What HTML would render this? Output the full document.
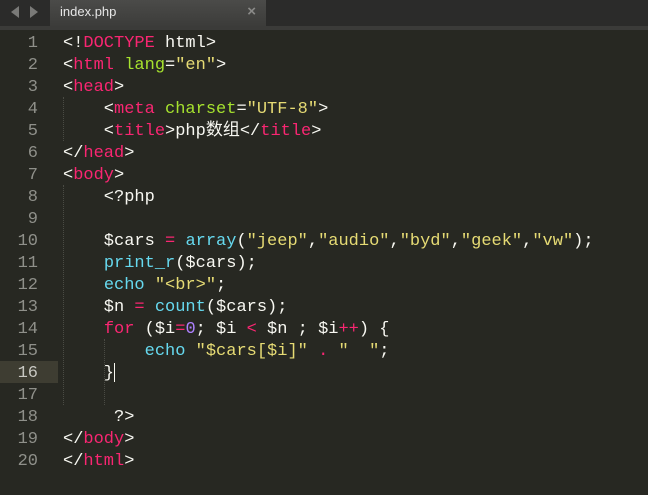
<!DOCTYPE html>
<html><head><meta charset="utf-8"><style>
body{margin:0;width:648px;height:492px;background:#272822;overflow:hidden;position:relative;font-family:"Liberation Mono","Noto Sans CJK SC",monospace}
.bar{position:absolute;left:0;top:0;width:648px;height:26px;background:#2b2b2a}
.strip{position:absolute;left:0;top:26px;width:648px;height:4px;background:#3b3b39}
.tab{position:absolute;left:50px;top:0;width:216px;height:26px;background:linear-gradient(#4b4b49,#3c3c3a)}
.tab span{position:absolute;left:10px;top:4px;font:13px "Liberation Sans",sans-serif;color:#e6e6e6}
.tab b{position:absolute;right:10px;top:3px;font:bold 15px "Liberation Sans",sans-serif;color:#8a8a88}
.arr{position:absolute;top:6px;width:0;height:0;border-top:6px solid transparent;border-bottom:6px solid transparent}
.code{position:absolute;left:0;top:33px;font-size:17px;line-height:22px;color:#f8f8f2;white-space:pre}
.ln{position:absolute;left:0;width:38px;text-align:right;color:#8f908a}
.tx{position:absolute;left:63px}
.hl{position:absolute;left:0;top:361px;width:58px;height:22px;background:#3e3d32}
.g{position:absolute;width:0;border-left:1px dotted #4a4b44}
.p{color:#f92672}.gr{color:#a6e22e}.y{color:#e6db74}.c{color:#66d9ef}.v{color:#ae81ff}
.cur{position:absolute;left:114px;top:363px;width:1px;height:19px;background:#f8f8f0}
</style></head><body>
<div class="bar"></div><div class="strip"></div>
<div class="arr" style="left:11px;border-right:8px solid #7a7a78"></div>
<div class="arr" style="left:30px;border-left:8px solid #7a7a78"></div>
<div class="tab"><span>index.php</span><b>×</b></div>
<div class="hl"></div>
<div class="g" style="left:63px;top:97px;height:44px"></div>
<div class="g" style="left:63px;top:185px;height:220px"></div>
<div class="g" style="left:104px;top:339px;height:66px"></div>
<div class="cur"></div>
<div class="code">
<div class="ln" style="top:0">1</div><div class="tx" style="top:0">&lt;!<span class="p">DOCTYPE</span> html&gt;</div>
<div class="ln" style="top:22px">2</div><div class="tx" style="top:22px">&lt;<span class="p">html</span> <span class="gr">lang</span>=<span class="y">"en"</span>&gt;</div>
<div class="ln" style="top:44px">3</div><div class="tx" style="top:44px">&lt;<span class="p">head</span>&gt;</div>
<div class="ln" style="top:66px">4</div><div class="tx" style="top:66px">    &lt;<span class="p">meta</span> <span class="gr">charset</span>=<span class="y">"UTF-8"</span>&gt;</div>
<div class="ln" style="top:88px">5</div><div class="tx" style="top:88px">    &lt;<span class="p">title</span>&gt;php数组&lt;/<span class="p">title</span>&gt;</div>
<div class="ln" style="top:110px">6</div><div class="tx" style="top:110px">&lt;/<span class="p">head</span>&gt;</div>
<div class="ln" style="top:132px">7</div><div class="tx" style="top:132px">&lt;<span class="p">body</span>&gt;</div>
<div class="ln" style="top:154px">8</div><div class="tx" style="top:154px">    &lt;?php</div>
<div class="ln" style="top:176px">9</div>
<div class="ln" style="top:198px">10</div><div class="tx" style="top:198px">    $cars <span class="p">=</span> <span class="c">array</span>(<span class="y">"jeep"</span>,<span class="y">"audio"</span>,<span class="y">"byd"</span>,<span class="y">"geek"</span>,<span class="y">"vw"</span>);</div>
<div class="ln" style="top:220px">11</div><div class="tx" style="top:220px">    <span class="c">print_r</span>($cars);</div>
<div class="ln" style="top:242px">12</div><div class="tx" style="top:242px">    <span class="c">echo</span> <span class="y">"&lt;br&gt;"</span>;</div>
<div class="ln" style="top:264px">13</div><div class="tx" style="top:264px">    $n <span class="p">=</span> <span class="c">count</span>($cars);</div>
<div class="ln" style="top:286px">14</div><div class="tx" style="top:286px">    <span class="p">for</span> ($i<span class="p">=</span><span class="v">0</span>; $i <span class="p">&lt;</span> $n ; $i<span class="p">++</span>) {</div>
<div class="ln" style="top:308px">15</div><div class="tx" style="top:308px">        <span class="c">echo</span> <span class="y">"$cars[$i]"</span> <span class="p">.</span> <span class="y">"  "</span>;</div>
<div class="ln" style="top:330px;color:#c8c8c2">16</div><div class="tx" style="top:330px">    }</div>
<div class="ln" style="top:352px">17</div>
<div class="ln" style="top:374px">18</div><div class="tx" style="top:374px">     ?&gt;</div>
<div class="ln" style="top:396px">19</div><div class="tx" style="top:396px">&lt;/<span class="p">body</span>&gt;</div>
<div class="ln" style="top:418px">20</div><div class="tx" style="top:418px">&lt;/<span class="p">html</span>&gt;</div>
</div>
</body></html>
